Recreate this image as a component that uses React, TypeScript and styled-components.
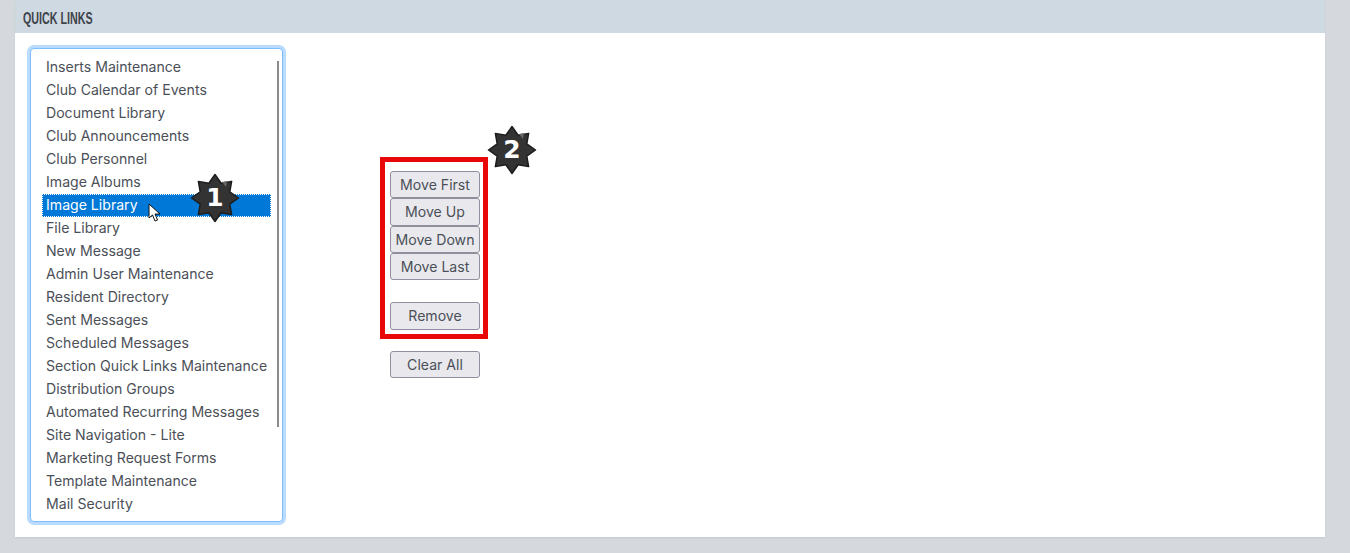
import * as React from "react";
import styled, {createGlobalStyle} from "styled-components";

const GlobalStyle = createGlobalStyle`
  html, body {
    margin: 0;
    padding: 0;
    height: 553px;
    overflow: hidden;
    background: #d5d9dd;
  }
`;

const Card = styled.div`
  width: 1310px;
  height: 537px;
  margin-left: 15px;
  background: #fff;
  box-shadow: 0 1px 2px rgba(0, 0, 0, 0.08);
`;

const CardHeader = styled.div`
  height: 33px;
  background: #cfd9e2;
  padding-left: 8px;
  box-sizing: border-box;
`;

const CardTitle = styled.span`
  display: inline-block;
  font-family: "Liberation Sans", sans-serif;
  font-weight: 700;
  font-size: 17px;
  line-height: 37px;
  color: #3f444b;
  transform: scaleX(0.63);
  transform-origin: left;
`;

const CardBody = styled.div`
  display: flex;
  align-items: flex-start;
  padding: 14px 0 0 14px;
`;

const ListBox = styled.div`
  position: relative;
  box-sizing: border-box;
  width: 253px;
  height: 474px;
  padding: 7px 11px 0;
  background: #fff;
  border: 1px solid #7fbdfd;
  border-radius: 4px;
  box-shadow: 0 0 0 3px #b9dbfe;
  margin: 1px 0 0 1px;
  flex-shrink: 0;
`;

const ListRow = styled.div<{ $selected?: boolean }>`
  height: 23px;
  box-sizing: border-box;
  padding-left: 4px;
  font-family: Inter, "Liberation Sans", sans-serif;
  font-size: 14.1px;
  line-height: 22px;
  white-space: nowrap;
  color: ${props => props.$selected ? "#fff" : "#4b5058"};
  background: ${props => props.$selected ? "#0078d7" : "transparent"};
  outline: ${props => props.$selected ? "1px dotted #fff" : "none"};
  outline-offset: -1px;
`;

const ScrollThumb = styled.div`
  position: absolute;
  top: 12px;
  right: 3px;
  width: 2px;
  height: 366px;
  background: #8a8a8a;
`;

const ActionColumn = styled.div`
  display: flex;
  flex-direction: column;
  align-items: flex-start;
  margin: 110px 0 0 97px;
`;

const Highlight = styled.div`
  box-sizing: border-box;
  width: 108px;
  height: 182px;
  border: 5px solid #e80808;
  padding: 9px 5px 0;
  display: flex;
  flex-direction: column;
`;

const ActionButton = styled.button<{ $gap?: number }>`
  box-sizing: border-box;
  width: 90px;
  height: 27.33px;
  flex-shrink: 0;
  margin: ${props => props.$gap || 0}px 0 0;
  padding: 0;
  background: #e9e9ed;
  border: 1px solid #8f8f9d;
  border-radius: 3px;
  font-family: Inter, "Liberation Sans", sans-serif;
  font-size: 14.1px;
  color: #4b5058;
`;

const ClearButton = styled(ActionButton)`
  margin-left: 10px;
`;

const Badge = styled.div<{ $left: number; $top: number }>`
  position: absolute;
  left: ${props => props.$left}px;
  top: ${props => props.$top}px;
  width: 50px;
  height: 50px;
`;

const BadgeDigit = styled.span`
  position: absolute;
  inset: 0;
  text-align: center;
  font-family: "DejaVu Sans", sans-serif;
  font-weight: 700;
  font-size: 25px;
  line-height: 50px;
  color: #fff;
`;

const Pointer = styled.svg`
  position: absolute;
  left: 148px;
  top: 203px;
`;

const links = [
  "Inserts Maintenance",
  "Club Calendar of Events",
  "Document Library",
  "Club Announcements",
  "Club Personnel",
  "Image Albums",
  "Image Library",
  "File Library",
  "New Message",
  "Admin User Maintenance",
  "Resident Directory",
  "Sent Messages",
  "Scheduled Messages",
  "Section Quick Links Maintenance",
  "Distribution Groups",
  "Automated Recurring Messages",
  "Site Navigation - Lite",
  "Marketing Request Forms",
  "Template Maintenance",
  "Mail Security",
];

const starPoints = Array.from({length: 16}, (_, i) => {
  const radius = i % 2 === 0 ? 23.5 : 16;
  const angle = (i * Math.PI) / 8 - Math.PI / 2;
  return `${25 + radius * Math.cos(angle)},${25 + radius * Math.sin(angle)}`;
}).join(" ");

const StepBadge: React.FC<{ left: number; top: number; step: number }> = ({left, top, step}) => (
  <Badge $left={left} $top={top}>
    <svg width="50" height="50" viewBox="0 0 50 50">
      <polygon points={starPoints} fill="#333" stroke="#1d1d1d" strokeWidth="1.5" strokeLinejoin="round"/>
      <path d="M32 9 L37 8 L36 14 Z" fill="#666"/>
    </svg>
    <BadgeDigit>{step}</BadgeDigit>
  </Badge>
);

export default function App() {
  return (
    <>
      <GlobalStyle/>
      <Card>
        <CardHeader><CardTitle>QUICK LINKS</CardTitle></CardHeader>
        <CardBody>
          <ListBox>
            {links.map(link =>
              <ListRow key={link} $selected={link === "Image Library"}>{link}</ListRow>
            )}
            <ScrollThumb/>
          </ListBox>
          <ActionColumn>
            <Highlight>
              <ActionButton>Move First</ActionButton>
              <ActionButton>Move Up</ActionButton>
              <ActionButton>Move Down</ActionButton>
              <ActionButton>Move Last</ActionButton>
              <ActionButton $gap={22}>Remove</ActionButton>
            </Highlight>
            <ClearButton $gap={12}>Clear All</ClearButton>
          </ActionColumn>
        </CardBody>
      </Card>
      <StepBadge left={190} top={173} step={1}/>
      <StepBadge left={487} top={125} step={2}/>
      <Pointer width="14" height="20" viewBox="0 0 14 20">
        <path d="M1 1 L1 15 L4.5 12 L7 18 L9.5 17 L7 11 L12 11 Z" fill="#fff" stroke="#111" strokeWidth="1"/>
      </Pointer>
    </>
  );
}
